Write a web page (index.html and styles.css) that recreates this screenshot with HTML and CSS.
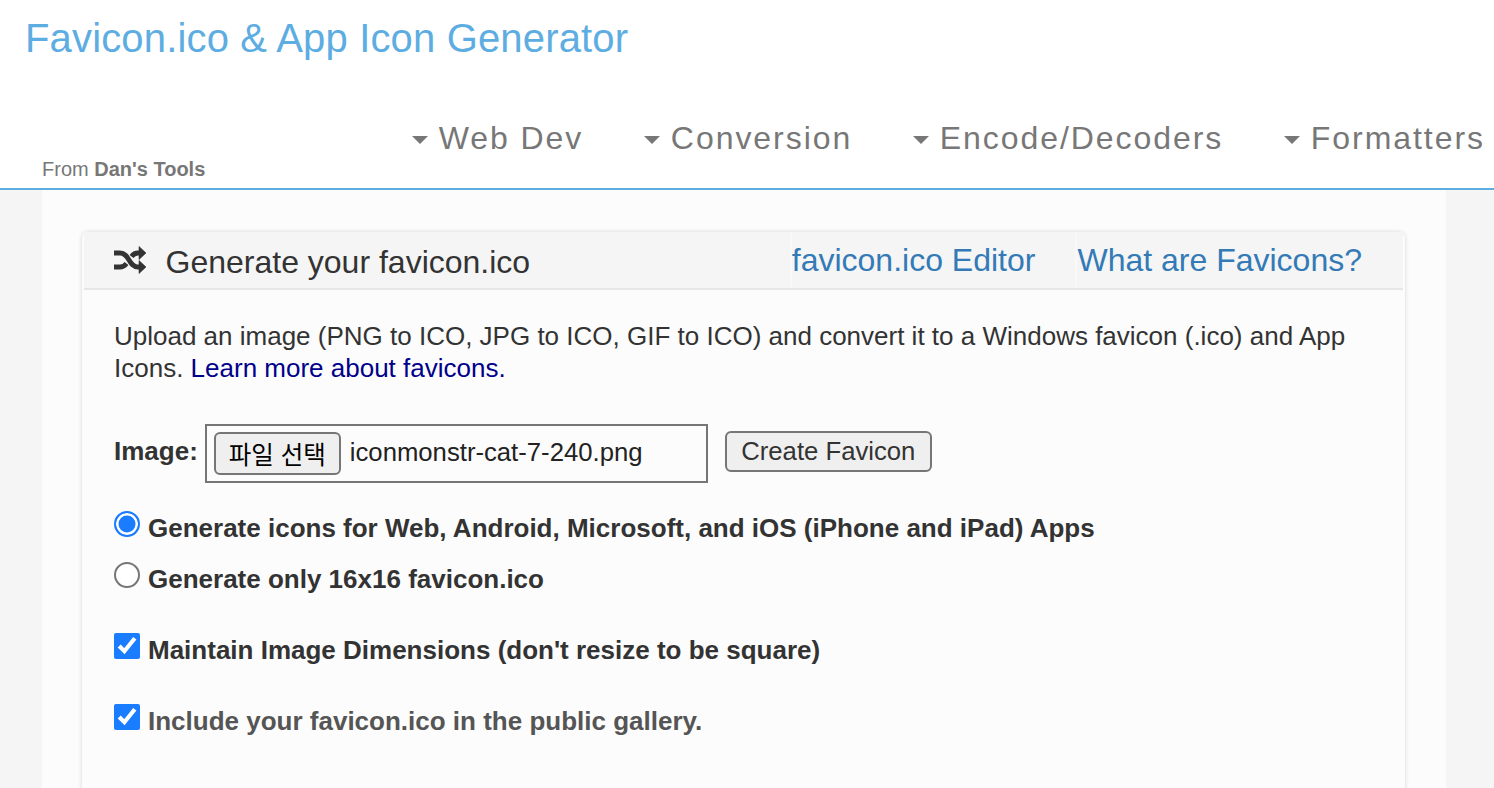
FILE: index.html
```html
<!DOCTYPE html>
<html lang="en">
<head>
<meta charset="utf-8">
<title>Favicon.ico &amp; App Icon Generator</title>
<link rel="stylesheet" href="styles.css">
</head>
<body>
<header class="site-header">
  <h1 class="site-title">Favicon.ico &amp; App Icon Generator</h1>
  <div class="header-row">
    <div class="from">From <b>Dan's Tools</b></div>
    <nav class="nav">
      <a class="nav-item"><span class="caret"></span>Web Dev</a>
      <a class="nav-item"><span class="caret"></span>Conversion</a>
      <a class="nav-item"><span class="caret"></span>Encode/Decoders</a>
      <a class="nav-item"><span class="caret"></span>Formatters</a>
    </nav>
  </div>
</header>
<main class="content">
  <section class="card">
    <div class="card-head">
      <svg class="shuffle" viewBox="0 0 32 28" width="32" height="28" aria-hidden="true">
        <path class="shuffle-line" d="M0 7h6c5 0 7 3.500 9 7s4 7 9 7h3M0 21h6c3 0 5-1.500 6.500-3.500M17.500 10.500c1.500-2 3.500-3.500 6.500-3.500h3"/>
        <path class="shuffle-head" d="M25 .5l7 6.500-7 6.500zM25 14.500l7 6.500-7 6.500z"/>
      </svg>
      <h2 class="card-title">Generate your favicon.ico</h2>
      <a class="tab tab-editor">favicon.ico Editor</a>
      <a class="tab tab-what">What are Favicons?</a>
    </div>
    <div class="card-body">
      <p class="intro">Upload an image (PNG to ICO, JPG to ICO, GIF to ICO) and convert it to a Windows favicon (.ico) and App Icons. <a class="learn">Learn more about favicons.</a></p>
      <div class="image-row">
        <label class="image-label">Image:</label>
        <div class="file-box"><span class="file-btn">파일 선택</span><span class="file-name">iconmonstr-cat-7-240.png</span></div>
        <button class="create" type="button">Create Favicon</button>
      </div>
      <label class="opt opt-r1"><input class="radio" type="radio" name="kind" checked>Generate icons for Web, Android, Microsoft, and iOS (iPhone and iPad) Apps</label>
      <label class="opt opt-r2"><input class="radio" type="radio" name="kind">Generate only 16x16 favicon.ico</label>
      <label class="opt opt-c1"><input type="checkbox" checked>Maintain Image Dimensions (don't resize to be square)</label>
      <label class="opt opt-c2 muted"><input type="checkbox" checked>Include your favicon.ico in the public gallery.</label>
    </div>
  </section>
</main>
</body>
</html>
```
FILE: styles.css
```css
* { box-sizing: border-box; }
html, body { margin: 0; height: 788px; overflow: hidden; }
body {
  background: #f5f5f5;
  font-family: "Liberation Sans", Arial, sans-serif;
  color: #333;
}
.site-header {
  height: 190px;
  background: #fff;
  border-bottom: 2px solid #5dade2;
  padding-top: 15px;
  display: flex;
  flex-direction: column;
}
.site-title {
  margin: 0 0 0 25px;
  font-size: 40px;
  line-height: 46px;
  font-weight: 400;
  letter-spacing: .16px;
  color: #5dade2;
}
.header-row {
  display: flex;
  justify-content: space-between;
  align-items: flex-start;
  margin-top: 58px;
  padding: 0 9px 0 42px;
}
.from {
  margin-top: 39px;
  font-size: 20px;
  line-height: 22px;
  color: #777;
}
.nav { display: flex; gap: 60.500px; }
.nav-item {
  display: flex;
  align-items: center;
  font-size: 32px;
  line-height: 38px;
  letter-spacing: 1.950px;
  color: #777;
}
.caret {
  width: 0;
  height: 0;
  margin-right: 11px;
  margin-top: 4px;
  border-left: 8px solid transparent;
  border-right: 8px solid transparent;
  border-top: 8px solid #777;
}
.content {
  width: 1404px;
  height: 598px;
  margin-left: 42px;
  padding: 42px 41px 0 40px;
  background: #fcfcfc;
  overflow: hidden;
}
.card {
  height: 620px;
  background: #fcfcfc;
  border-radius: 6px;
  box-shadow: 0 0 4px rgba(0,0,0,.16);
}
.card-head {
  height: 58px;
  margin: 0 2px;
  display: flex;
  align-items: center;
  background: #f5f5f5;
  border-bottom: 2px solid #e6e6e6;
}
.shuffle { margin-left: 30px; flex: none; }
.shuffle-line { fill: none; stroke: #333; stroke-width: 4.800; }
.shuffle-head { fill: #333; stroke: #333; stroke-width: .6; stroke-linejoin: round; }
.card-title {
  margin: 4px 0 0 19.500px;
  font-size: 32px;
  line-height: 40px;
  font-weight: 400;
  color: #333;
}
.tab {
  font-size: 32px;
  line-height: 54px;
  color: #337ab7;
  white-space: nowrap;
  border-left: 2px solid #f9f9f9;
}
.tab-editor { margin-left: auto; }
.tab-what { margin-left: 40px; margin-right: 41px; }
.card-body { padding: 30px 32px 0; }
.intro {
  margin: 0;
  font-size: 26px;
  line-height: 32px;
  color: #333;
}
.learn { color: #00008b; }
.image-row {
  display: flex;
  align-items: center;
  margin-top: 40px;
}
.image-label { font-size: 26px; font-weight: 700; margin: 0 7px 4px 0; }
.file-box {
  width: 503px;
  height: 59px;
  display: flex;
  align-items: center;
  padding-left: 7px;
  border: 2px solid #767676;
  font-size: 25.700px;
  color: #222;
}
.file-name { margin-bottom: 2px; }
.file-btn {
  width: 127px;
  height: 43px;
  display: flex;
  align-items: center;
  justify-content: center;
  margin-right: 9px;
  border: 2px solid #767676;
  border-radius: 6px;
  background: #efefef;
  color: #000;
  font-family: "Liberation Sans", "Noto Sans CJK KR", sans-serif;
  font-size: 24.500px;
}
.create {
  width: 207px;
  height: 41px;
  margin: -5px 0 0 17px;
  padding: 0;
  border: 2px solid #767676;
  border-radius: 6px;
  background: #efefef;
  color: #333;
  font: 25.700px "Liberation Sans", Arial, sans-serif;
}
.opt {
  display: flex;
  align-items: center;
  font-size: 26px;
  line-height: 32px;
  font-weight: 700;
  color: #333;
}
.opt input {
  width: 26px;
  height: 26px;
  margin: -4px 8px 4px 0;
  accent-color: #1a7cff;
  flex: none;
}
.opt .radio {
  appearance: none;
  border: 2px solid #767676;
  border-radius: 50%;
  background: #fff;
}
.opt .radio:checked {
  border-color: #1a7cff;
  background: #1a7cff;
  box-shadow: inset 0 0 0 2.500px #fff;
}
.muted { color: #555; }
.opt-r1 { margin-top: 29px; }
.opt-r2 { margin-top: 19px; }
.opt-c1 { margin-top: 39px; }
.opt-c2 { margin-top: 39px; }
```
